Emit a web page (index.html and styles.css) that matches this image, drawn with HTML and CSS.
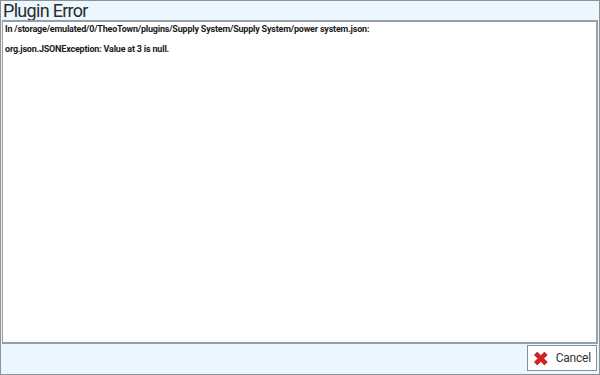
FILE: index.html
```html
<!DOCTYPE html>
<html lang="en">
<head>
  <meta charset="UTF-8" />
  <title>Plugin Error</title>
  <link rel="stylesheet" href="styles.css">
</head>
<body>
  <div class="dialog">
    <h1 class="title">Plugin Error</h1>
    <div class="message">
      <p>In /storage/emulated/0/TheoTown/plugins/Supply System/Supply System/power system.json:</p>
      <p>org.json.JSONException: Value at 3 is null.</p>
    </div>
    <div class="actions">
      <button class="btn">
        <svg class="icon" viewBox="0 0 16 16" width="16" height="15">
          <path d="M1.2 4.2 L4.2 1.2 L8 5 L11.8 1.2 L14.8 4.2 L11 8 L14.8 11.8 L11.8 14.8 L8 11 L4.2 14.8 L1.2 11.8 L5 8 Z" fill="#dc1f1f" stroke="#8e1212" stroke-width="0.8" stroke-linejoin="round"/>
        </svg>
        <span>Cancel</span>
      </button>
    </div>
  </div>
</body>
</html>
```

FILE: styles.css
```css
* {
  margin: 0;
  padding: 0;
  box-sizing: border-box;
}

html, body {
  width: 600px;
  height: 375px;
  overflow: hidden;
}

body {
  font-family: Roboto, 'Liberation Sans', sans-serif;
  color: #1a1a1a;
}

.dialog {
  width: 600px;
  height: 375px;
  background: #eaf7fe;
  border: 1px solid #8d9296;
  display: flex;
  flex-direction: column;
  padding: 0 1px 1px 1px;
}

.title {
  font-size: 18px;
  font-weight: 400;
  letter-spacing: -0.7px;
  color: #2b2b2b;
  line-height: 19px;
  height: 19px;
  padding-left: 1px;
}

.message {
  flex: 1;
  background: #fff;
  border-top: 2px solid #9a9ea2;
  border-left: 1px solid #9a9ea2;
  border-right: 2px solid #9a9ea2;
  border-bottom: 2px solid #9a9ea2;
  padding: 2px 2px;
  font-size: 9px;
  font-weight: bold;
  letter-spacing: -0.2px;
  line-height: 10px;
}

.message p {
  margin-bottom: 10px;
}

.actions {
  display: flex;
  justify-content: flex-end;
  padding: 1px 1px 1px 0;
  height: 29px;
}

.btn {
  display: flex;
  align-items: center;
  gap: 7px;
  width: 70px;
  height: 26px;
  padding: 0 5px;
  background: #fff;
  border: 1px solid #7c93a6;
  font-family: Roboto, 'Liberation Sans', sans-serif;
  font-size: 12px;
  letter-spacing: -0.2px;
  color: #333;
}

.icon {
  display: block;
}
```
